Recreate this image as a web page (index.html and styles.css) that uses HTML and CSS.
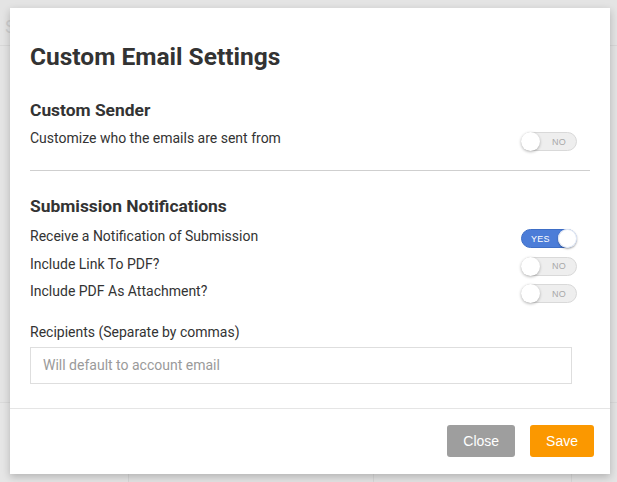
FILE: index.html
```html
<!DOCTYPE html>
<html>
<head>
<meta charset="utf-8">
<link rel="stylesheet" href="styles.css">
</head>
<body>
<div class="page">
  <div class="page-header"><span class="page-letter">S</span></div>
  <div class="page-spacer"></div>
  <div class="page-cards">
    <div class="card c1"></div>
    <div class="card c2"></div>
    <div class="card c3"></div>
    <div class="card c4"></div>
  </div>
</div>

<div class="modal">
  <div class="modal-body">
    <h1 class="modal-title">Custom Email Settings</h1>

    <h2 class="section-title first">Custom Sender</h2>
    <div class="row">
      <span class="row-label">Customize who the emails are sent from</span>
      <span class="toggle off"><span class="knob"></span><span class="toggle-text">NO</span></span>
    </div>

    <hr class="divider">

    <h2 class="section-title">Submission Notifications</h2>
    <div class="rows">
      <div class="row">
        <span class="row-label">Receive a Notification of Submission</span>
        <span class="toggle on"><span class="toggle-text">YES</span><span class="knob"></span></span>
      </div>
      <div class="row">
        <span class="row-label">Include Link To PDF?</span>
        <span class="toggle off"><span class="knob"></span><span class="toggle-text">NO</span></span>
      </div>
      <div class="row">
        <span class="row-label">Include PDF As Attachment?</span>
        <span class="toggle off"><span class="knob"></span><span class="toggle-text">NO</span></span>
      </div>
    </div>

    <label class="field-label">Recipients (Separate by commas)</label>
    <input class="field-input" type="text" placeholder="Will default to account email">
  </div>
  <div class="modal-footer">
    <button class="btn btn-close">Close</button>
    <button class="btn btn-save">Save</button>
  </div>
</div>
</body>
</html>
```

FILE: styles.css
```css
* { box-sizing: border-box; }
html, body {
  margin: 0;
  padding: 0;
  width: 617px;
  height: 482px;
  overflow: hidden;
  background: #e4e4e4;
  font-family: Roboto, "Liberation Sans", sans-serif;
}
.page {
  height: 482px;
  display: flex;
  flex-direction: column;
}
.page-header {
  height: 46px;
  border-bottom: 1px solid #d8d8d8;
  padding: 18px 0 0 5px;
}
.page-letter {
  color: #cfcfcf;
  font-size: 18px;
  line-height: 18px;
}
.page-spacer { flex: 1; }
.page-cards {
  height: 80px;
  display: grid;
  grid-template-columns: 128px 245px 198px 1fr;
  border-top: 1px solid #dadada;
}
.card { border-left: 1px solid #d8d8d8; }
.card.c1 { border-left: none; background: #e6e6e6; }

.modal {
  position: absolute;
  left: 10px;
  top: 8px;
  width: 600px;
  background: #fff;
  box-shadow: 0 3px 8px rgba(0,0,0,0.22);
  display: flex;
  flex-direction: column;
}
.modal-body {
  padding: 35px 20px 24px 20px;
  display: flex;
  flex-direction: column;
}
.modal-title {
  margin: 0;
  font-size: 24.5px;
  line-height: 28px;
  font-weight: 700;
  color: #333;
}
.section-title {
  margin: 24px 0 0 0;
  font-size: 17.4px;
  line-height: 22px;
  font-weight: 700;
  color: #333;
}
.section-title.first { margin-top: 28px; }
.row {
  display: flex;
  justify-content: space-between;
  align-items: flex-start;
  padding-right: 13px;
  margin-top: 7px;
  height: 20px;
}
.row .toggle { margin-top: 4px; }
.rows .row { margin-top: 7.5px; }
.rows .row:first-child { margin-top: 9px; }
.rows .row .toggle { margin-top: 3px; }
.row-label {
  font-size: 14px;
  line-height: 20px;
  color: #333;
}
.divider {
  margin: 22px 0 0 0;
  border: none;
  border-top: 1px solid #cfcfcf;
  height: 0;
}

.toggle {
  width: 56px;
  height: 19px;
  border-radius: 10px;
  display: flex;
  align-items: center;
  justify-content: space-between;
  font-family: "Liberation Sans", Arial, sans-serif;
  font-size: 9px;
  letter-spacing: 0.2px;
}
.toggle.off {
  background: #eeeeee;
  border: 1px solid #d9d9d9;
  color: #a8a8a8;
}
.toggle.on {
  background: #4c7dd8;
  border: 1px solid #3e6ec6;
  color: #fff;
}
.knob {
  width: 19px;
  height: 19px;
  margin: -1px;
  border-radius: 50%;
  background: #fff;
  box-shadow: 0 1px 3px rgba(0,0,0,0.3);
}
.toggle.on .knob { box-shadow: 0 1px 2px rgba(0,0,0,0.35), inset 0 0 0 1px #dfe6f3; }
.toggle.off .toggle-text { padding-right: 10px; }
.toggle.on .toggle-text { padding-left: 9px; }

.field-label {
  margin-top: 20.5px;
  font-size: 14px;
  line-height: 20px;
  color: #333;
}
.field-input {
  margin-top: 5px;
  width: 542px;
  height: 37px;
  border: 1px solid #dedede;
  border-radius: 0;
  padding: 0 12px;
  font-family: Roboto, "Liberation Sans", sans-serif;
  font-size: 14px;
  color: #333;
  outline: none;
}
.field-input::placeholder { color: #9a9a9a; }

.modal-footer {
  border-top: 1px solid #e5e5e5;
  padding: 16px 16px 17px 16px;
  display: flex;
  justify-content: flex-end;
  gap: 15px;
}
.btn {
  height: 32px;
  padding: 0 16px;
  border: none;
  border-radius: 3px;
  font-family: "Liberation Sans", Arial, sans-serif;
  font-size: 14px;
  color: #fff;
}
.btn-close { background: #9e9e9e; }
.btn-save { background: #fb9800; }
```
